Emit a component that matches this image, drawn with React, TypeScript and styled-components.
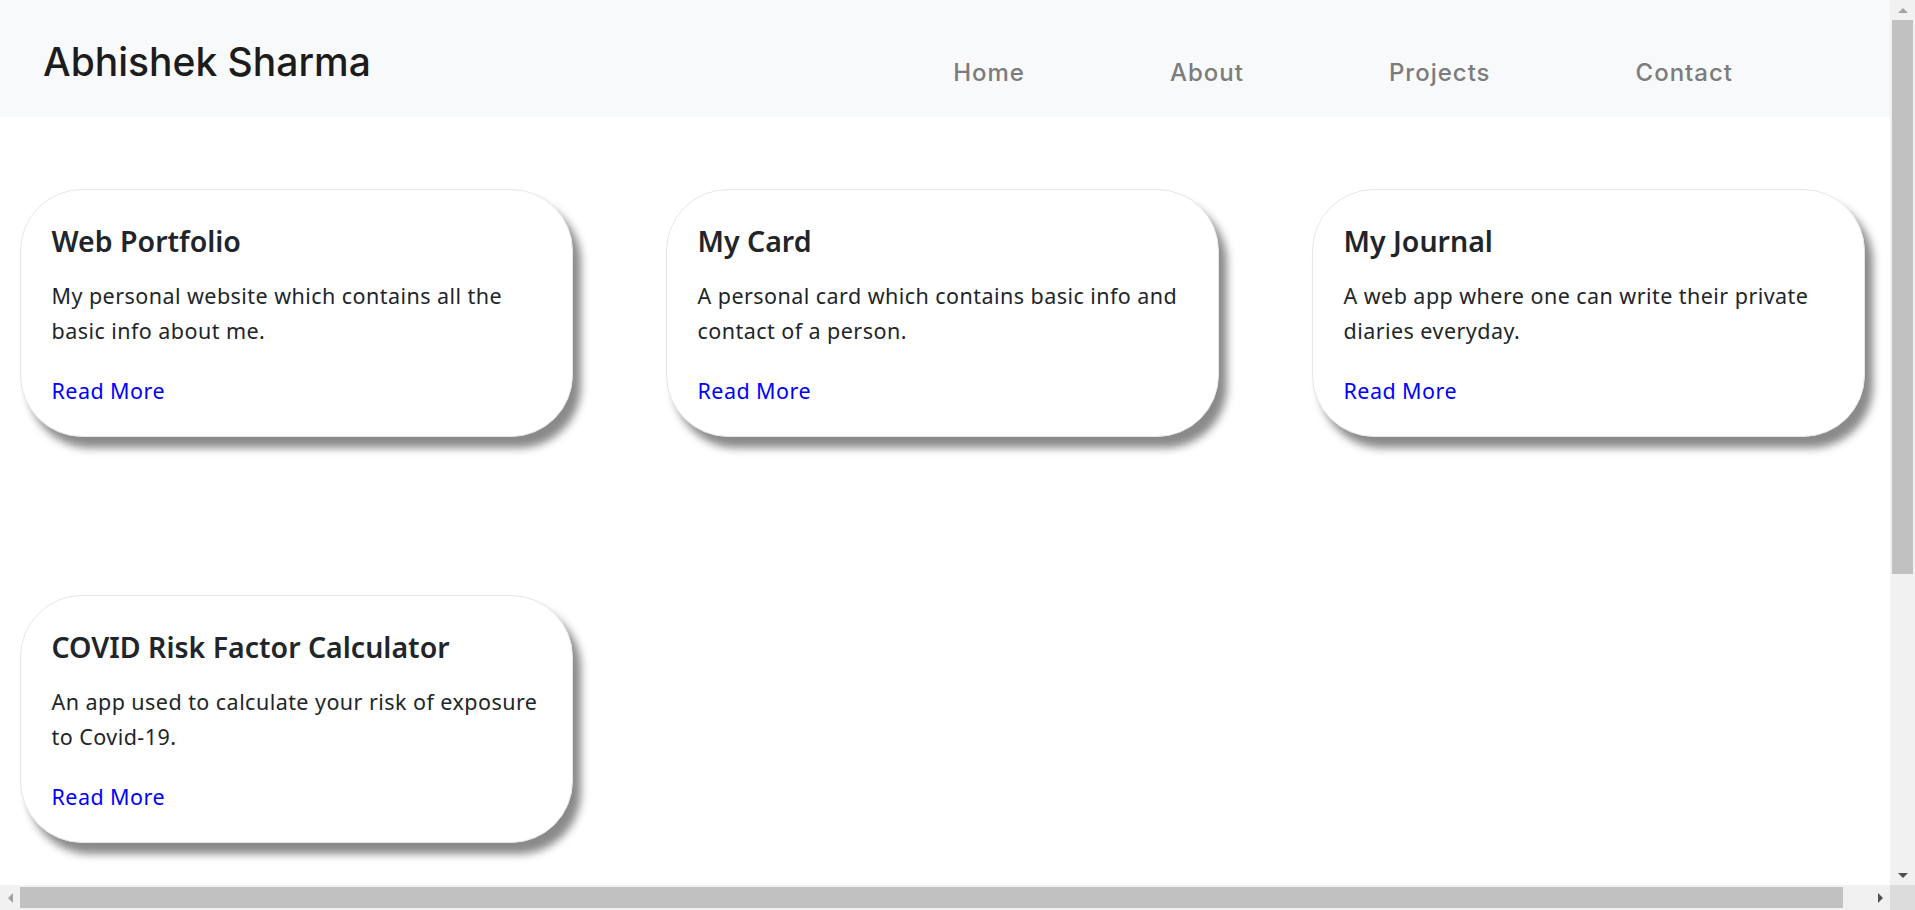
import React from "react";
import styled, { createGlobalStyle } from "styled-components";

const GlobalStyle = createGlobalStyle`
  html, body {
    margin: 0;
    padding: 0;
    background: #ffffff;
    overflow: hidden;
  }
  body {
    font-family: "Noto Sans", "Open Sans", sans-serif;
    color: #212529;
  }
`;

/* ---------- window frame with classic scrollbars ---------- */

const Frame = styled.div`
  display: grid;
  grid-template-columns: 1fr 25px;
  grid-template-rows: 1fr 25px;
  width: 100vw;
  height: 100vh;
  overflow: hidden;
`;

const Content = styled.div`
  overflow: hidden;
  min-width: 0;
  min-height: 0;
`;

const ScrollBar = styled.div<{ $vertical?: boolean }>`
  display: flex;
  flex-direction: ${(p) => (p.$vertical ? "column" : "row")};
  background: #f1f1f1;
`;

const ScrollButton = styled.div<{ $vertical?: boolean }>`
  flex: 0 0 20px;
  display: flex;
  align-items: center;
  justify-content: center;
  background: #f1f1f1;
`;

const Track = styled.div<{ $vertical?: boolean }>`
  flex: 1;
  display: flex;
  flex-direction: ${(p) => (p.$vertical ? "column" : "row")};
`;

const Thumb = styled.div<{ $vertical?: boolean; $length: number }>`
  background: #c1c1c1;
  ${(p) =>
    p.$vertical
      ? `width: 21px; margin: 0 2px; height: ${p.$length}px;`
      : `height: 21px; margin: 2px 0; width: ${p.$length}px;`}
`;

const Corner = styled.div`
  background: #dcdcdc;
`;

type Dir = "up" | "down" | "left" | "right";

const arrowPoints: Record<Dir, string> = {
  up: "0,5 5,0 10,5",
  down: "0,0 10,0 5,5",
  left: "5,0 5,10 0,5",
  right: "0,0 0,10 5,5",
};

function Arrow({ dir, active }: { dir: Dir; active?: boolean }) {
  const horiz = dir === "up" || dir === "down";
  return (
    <svg
      width={horiz ? 10 : 5}
      height={horiz ? 5 : 10}
      viewBox={horiz ? "0 0 10 5" : "0 0 5 10"}
    >
      <polygon points={arrowPoints[dir]} fill={active ? "#505050" : "#a3a3a3"} />
    </svg>
  );
}

/* ---------- page ---------- */

const Page = styled.div`
  width: 1918px;
  min-height: 1350px;
`;

const Header = styled.header`
  height: 117px;
  background: #f8f9fa;
  display: flex;
  align-items: center;
  padding: 0 185px 0 43px;
  box-sizing: border-box;
`;

const Brand = styled.a`
  font-family: "Inter", "Noto Sans", sans-serif;
  font-weight: 500;
  font-size: 39px;
  color: #1c1c1c;
  text-decoration: none;
  margin-top: 6px;
`;

const Nav = styled.nav`
  margin-left: auto;
  display: flex;
  gap: 145px;
  margin-top: 28px;
`;

const NavLink = styled.a`
  font-family: "Inter", "Noto Sans", sans-serif;
  font-weight: 500;
  font-size: 24px;
  letter-spacing: 1px;
  color: #7c7c7c;
  text-decoration: none;
`;

const Grid = styled.main`
  display: grid;
  grid-template-columns: repeat(3, 553px);
  column-gap: 93px;
  row-gap: 158px;
  padding: 72px 0 0 19.5px;
`;

const Card = styled.article`
  box-sizing: border-box;
  height: 248px;
  background: #ffffff;
  border: 1px solid #e6e6e6;
  border-radius: 62px;
  box-shadow: 8px 11px 8px #8a8a8a;
  padding: 34px 26px 30px 31px;
`;

const CardTitle = styled.h4`
  margin: 0 0 19px;
  font-size: 28.5px;
  font-weight: 600;
  line-height: 35px;
  color: #212529;
`;

const CardText = styled.p`
  margin: 0 0 28px;
  font-size: 21.5px;
  letter-spacing: 0.45px;
  line-height: 35px;
  color: #212529;
`;

const ReadMore = styled.a`
  display: inline-block;
  font-size: 21.5px;
  letter-spacing: 0.45px;
  line-height: 30px;
  color: #0000ff;
  text-decoration: none;
`;

const projects = [
  {
    title: "Web Portfolio",
    text: "My personal website which contains all the basic info about me.",
  },
  {
    title: "My Card",
    text: "A personal card which contains basic info and contact of a person.",
  },
  {
    title: "My Journal",
    text: "A web app where one can write their private diaries everyday.",
  },
  {
    title: "COVID Risk Factor Calculator",
    text: "An app used to calculate your risk of exposure to Covid-19.",
  },
];

export default function App() {
  return (
    <>
      <GlobalStyle />
      <Frame>
        <Content>
          <Page>
            <Header>
              <Brand href="#">Abhishek Sharma</Brand>
              <Nav>
                <NavLink href="#">Home</NavLink>
                <NavLink href="#">About</NavLink>
                <NavLink href="#">Projects</NavLink>
                <NavLink href="#">Contact</NavLink>
              </Nav>
            </Header>
            <Grid>
              {projects.map((p) => (
                <Card key={p.title}>
                  <CardTitle>{p.title}</CardTitle>
                  <CardText>{p.text}</CardText>
                  <ReadMore href="#">Read More</ReadMore>
                </Card>
              ))}
            </Grid>
          </Page>
        </Content>
        <ScrollBar $vertical>
          <ScrollButton $vertical>
            <Arrow dir="up" />
          </ScrollButton>
          <Track $vertical>
            <Thumb $vertical $length={554} />
          </Track>
          <ScrollButton $vertical>
            <Arrow dir="down" active />
          </ScrollButton>
        </ScrollBar>
        <ScrollBar>
          <ScrollButton>
            <Arrow dir="left" />
          </ScrollButton>
          <Track>
            <Thumb $length={1823} />
          </Track>
          <ScrollButton>
            <Arrow dir="right" active />
          </ScrollButton>
        </ScrollBar>
        <Corner />
      </Frame>
    </>
  );
}
